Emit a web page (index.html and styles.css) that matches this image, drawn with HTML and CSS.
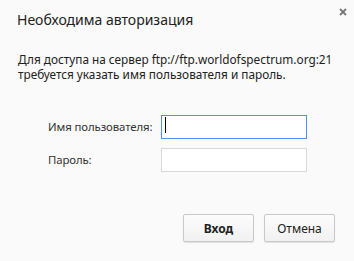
FILE: index.html
```html
<!DOCTYPE html>
<html lang="ru">
<head>
    <meta charset="UTF-8">
    <title>Необходима авторизация</title>
    <link rel="stylesheet" href="styles.css">
</head>
<body>
    <div class="dialog">
        <div class="header">
            <h1 class="title">Необходима авторизация</h1>
            <button class="close-btn" aria-label="Закрыть">
                <svg width="8" height="8" viewBox="0 0 8 8">
                    <path d="M1 1L7 7M7 1L1 7" stroke="#777" stroke-width="1.8"/>
                </svg>
            </button>
        </div>

        <p class="message">Для доступа на сервер ftp://ftp.worldofspectrum.org:21<br>требуется указать имя пользователя и пароль.</p>

        <div class="form">
            <label class="label" for="user">Имя пользователя:</label>
            <span class="field-wrap caret"><input class="field focused" id="user" type="text"></span>
            <label class="label" for="pass">Пароль:</label>
            <span class="field-wrap"><input class="field" id="pass" type="password"></span>
        </div>

        <div class="actions">
            <button class="btn btn-primary">Вход</button>
            <button class="btn">Отмена</button>
        </div>
    </div>
</body>
</html>
```

FILE: styles.css
```css
body {
    margin: 0;
    font-family: 'Noto Sans', 'Open Sans', sans-serif;
    background: #fafafa;
    color: #222;
}
.dialog {
    position: relative;
    width: 354px;
    height: 261px;
    box-sizing: border-box;
}
.header {
    padding: 10px 17px 0 17px;
}
.title {
    margin: 0;
    font-size: 14px;
    line-height: 19px;
    font-weight: 400;
    color: #222;
}
.close-btn {
    position: absolute;
    top: 7px;
    right: 6px;
    width: 10px;
    height: 10px;
    padding: 0;
    border: none;
    background: none;
    display: flex;
    align-items: center;
    justify-content: center;
}
.message {
    margin: 23px 0 0 18px;
    font-size: 11.8px;
    line-height: 15px;
    color: #222;
}
.form {
    display: grid;
    grid-template-columns: 113px 146px;
    row-gap: 9px;
    align-items: center;
    margin: 32px 0 0 48px;
}
.label {
    font-size: 11.4px;
    letter-spacing: -0.1px;
    color: #333;
}
.field-wrap {
    position: relative;
    display: block;
    height: 24px;
}
.caret::after {
    content: "";
    position: absolute;
    left: 4px;
    top: 3px;
    width: 1px;
    height: 16px;
    background: #000;
}
.field {
    box-sizing: border-box;
    width: 146px;
    height: 24px;
    margin: 0;
    border: 1px solid #d9d9d9;
    background: #fff;
    outline: none;
}
.field.focused {
    border-color: #4d90fe;
}
.actions {
    display: flex;
    justify-content: flex-end;
    gap: 10px;
    margin: 43px 19px 0 0;
}
.btn {
    box-sizing: border-box;
    width: 71px;
    height: 28px;
    border: 1px solid #c8c8c8;
    border-radius: 2px;
    background: linear-gradient(#fcfcfc, #f1f1f1);
    box-shadow: 0 1px 1px rgba(0, 0, 0, 0.1);
    font-family: inherit;
    font-size: 12px;
    color: #222;
}
.btn-primary {
    font-weight: 700;
}
```
